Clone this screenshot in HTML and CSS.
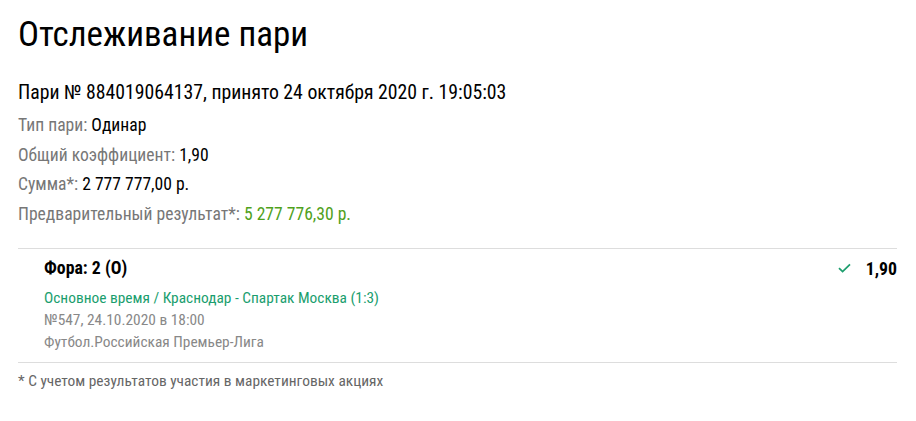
FILE: index.html
```html
<!DOCTYPE html>
<html lang="ru">
<head>
    <meta charset="UTF-8">
    <title>Отслеживание пари</title>
    <link rel="stylesheet" href="styles.css">
</head>
<body>
    <div class="page">
        <h1 class="title">Отслеживание пари</h1>

        <div class="bet-head">Пари № 884019064137, принято 24 октября 2020 г. 19:05:03</div>

        <div class="info">
            <div class="info-row"><span class="label">Тип пари:</span> Одинар</div>
            <div class="info-row"><span class="label">Общий коэффициент:</span> 1,90</div>
            <div class="info-row"><span class="label">Сумма*:</span> 2 777 777,00 р.</div>
            <div class="info-row"><span class="label">Предварительный результат*:</span> <span class="win">5 277 776,30 р.</span></div>
        </div>

        <div class="events">
            <div class="event">
                <div class="event-main">
                    <div class="event-name">Фора: 2 (O)</div>
                    <div class="event-match">Основное время / Краснодар - Спартак Москва (1:3)</div>
                    <div class="event-meta">№547, 24.10.2020 в 18:00</div>
                    <div class="event-meta">Футбол.Российская Премьер-Лига</div>
                </div>
                <div class="event-side">
                    <svg class="check" width="13" height="10" viewBox="0 0 13 10">
                        <path d="M1 5.2 L4.6 8.6 L12 1.4" fill="none" stroke="#1d9e6e" stroke-width="1.8"/>
                    </svg>
                    <span class="event-coef">1,90</span>
                </div>
            </div>
        </div>

        <div class="note">* С учетом результатов участия в маркетинговых акциях</div>
    </div>
</body>
</html>
```

FILE: styles.css
```css
body {
    margin: 0;
    font-family: "Roboto Condensed", "DejaVu Sans Condensed", Roboto, sans-serif;
    color: #000;
    background: #fff;
}

.page {
    padding: 14px 19px 0 18px;
}

.title {
    margin: 0;
    font-size: 35px;
    font-weight: 400;
    line-height: 42px;
}

.bet-head {
    margin-top: 25px;
    font-size: 19.75px;
    line-height: 24px;
}

.info {
    margin-top: 6px;
}

.info-row {
    font-size: 17.6px;
    line-height: 29.5px;
}

.label {
    color: #777;
}

.win {
    color: #4fa11b;
}

.events {
    margin-top: 19px;
    border-top: 1px solid #ddd;
    border-bottom: 1px solid #ddd;
}

.event {
    display: flex;
    justify-content: space-between;
    padding: 8px 0 9px 26px;
}

.event-name {
    font-size: 17.8px;
    font-weight: 700;
    line-height: 22px;
    margin-bottom: 8px;
}

.event-match {
    font-size: 15.4px;
    line-height: 22px;
    color: #1a9e6e;
}

.event-meta {
    font-size: 15.4px;
    line-height: 22px;
    color: #888;
}

.event-side {
    display: flex;
    align-items: center;
    gap: 15px;
    height: 22px;
}

.event-coef {
    font-size: 17.8px;
    font-weight: 700;
}

.note {
    margin-top: 9px;
    font-size: 15.4px;
    line-height: 18px;
    color: #666;
}
```
